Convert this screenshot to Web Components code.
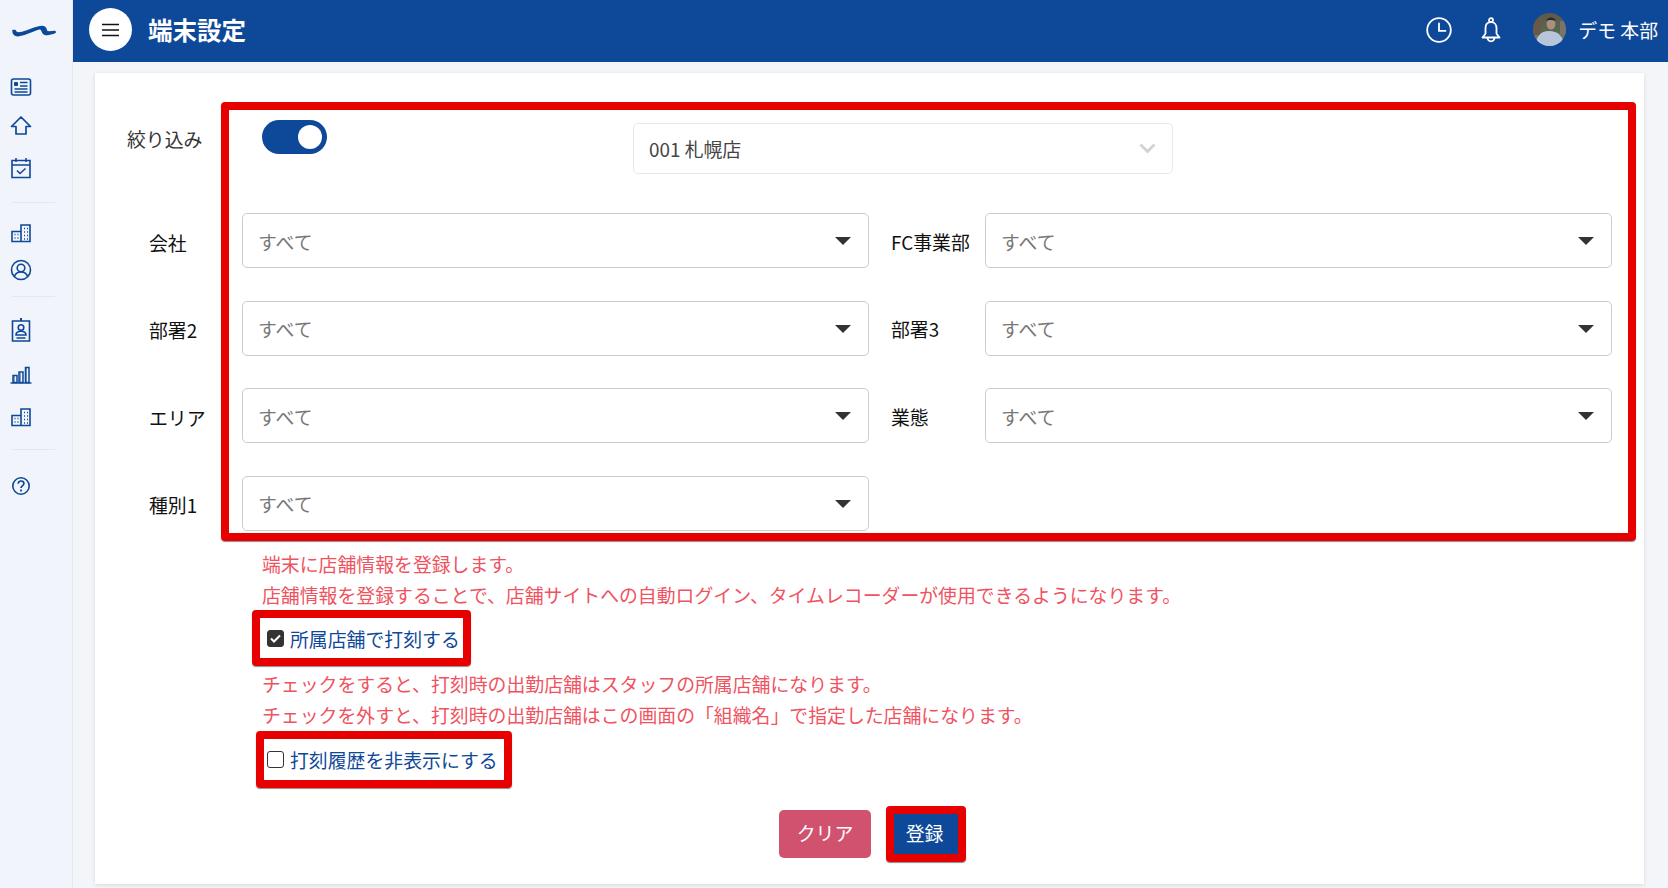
<!DOCTYPE html>
<html lang="ja">
<head>
<meta charset="utf-8">
<title>端末設定</title>
<style>
  html, body { margin: 0; height: 100%; overflow: hidden; }
  body { font-family: "Noto Sans CJK JP", "Noto Sans", sans-serif; font-size: 18.87px; background: #f3f5f8; }
</style>
</head>
<body>
<app-shell></app-shell>

<script>
const ink = '#0e4898';
const building = `<svg width="22" height="22" viewBox="0 0 22 22" fill="none" stroke="${ink}" stroke-width="1.6">
  <path d="M2 9.5h9v10H2zM11 19.5V3h9v16.500z"/>
  <path d="M4.500 12.500h1M7.500 12.500h1M4.500 16h1M7.500 16h1M14 6.500h1M17 6.500h1M14 10h1M17 10h1M14 13.500h1M17 13.500h1M14 17h1M17 17h1" stroke-width="1.500"/>
</svg>`;

class AppSidebar extends HTMLElement {
  constructor() {
    super();
    this.attachShadow({ mode: 'open' }).innerHTML = `
      <style>
        :host { display: flex; flex-direction: column; width: 72px; flex: none; height: 888px;
          background: #f1f5fb; border-right: 1px solid #e2e8f4; }
        .logo { height: 62px; display: flex; align-items: center; margin-left: 12px; }
        .item { height: 24px; display: flex; align-items: center; justify-content: center; width: 41px; }
        hr { border: 0; border-top: 1px solid #e4e8ee; width: 43px; margin: 0 0 0 12px; }
      </style>
      <div class="logo">
        <svg width="44" height="16" viewBox="0 0 44 16" fill="${ink}" stroke="${ink}" stroke-linecap="round" stroke-linejoin="round">
          <path d="M1 7.500C1 11.500 3 13 7 12.500S17 9.500 22 7.500 29 5 30 7.500 31 11.500 34 11.500 40 10.500 43 9.500L43 8.500C39 9 35 9.500 34.500 8S34 3.500 30 3.500 22 5.500 15 8 4 11 3 7.500z" stroke-width="1.600"/>
        </svg>
      </div>
      <div class="item" style="margin-top:13px">
        <svg width="22" height="20" viewBox="0 0 22 20" fill="none" stroke="${ink}" stroke-width="1.600">
          <rect x="1.500" y="2" width="19" height="16" rx="2"/>
          <path d="M4.500 5.500h3v3h-3z" fill="${ink}" stroke-width="1"/>
          <path d="M10 5.500h7.500M10 9h7.500M4.500 12h13M4.500 15h13"/>
        </svg>
      </div>
      <div class="item" style="margin-top:15px">
        <svg width="22" height="22" viewBox="0 0 22 22" fill="none" stroke="${ink}" stroke-width="1.700" stroke-linejoin="round">
          <path d="M11 2 1.500 11.500h4.500v7.500h10v-7.500h4.500z"/>
        </svg>
      </div>
      <div class="item" style="margin-top:18px">
        <svg width="22" height="22" viewBox="0 0 22 22" fill="none" stroke="${ink}" stroke-width="1.600">
          <path d="M2 3.500h18v17H2zM2 8h18"/>
          <path d="M6 1v4M16 1v4" stroke-width="1.500"/>
          <path d="M7 13.500l3 3 5.500-5"/>
        </svg>
      </div>
      <hr style="margin-top:22px">
      <div class="item" style="margin-top:18px">${building}</div>
      <div class="item" style="margin-top:13px">
        <svg width="22" height="22" viewBox="0 0 22 22" fill="none" stroke="${ink}" stroke-width="1.600">
          <circle cx="11" cy="11" r="9.500"/>
          <circle cx="11" cy="9" r="3.800"/>
          <path d="M4.500 17.500c1-3.500 3.500-4.500 6.500-4.500s5.500 1 6.500 4.500"/>
        </svg>
      </div>
      <hr style="margin-top:14px">
      <div class="item" style="margin-top:21px">
        <svg width="20" height="24" viewBox="0 0 20 24" fill="none" stroke="${ink}" stroke-width="1.600">
          <path d="M1.500 3h17v20h-17z"/>
          <path d="M10 0v3" stroke-width="2"/>
          <circle cx="10" cy="9.500" r="2.800"/>
          <path d="M5 17c0-3 2-3.800 5-3.800s5 .8 5 3.800zM5.500 20h9"/>
        </svg>
      </div>
      <div class="item" style="margin-top:21px">
        <svg width="22" height="18" viewBox="0 0 22 18" fill="none" stroke="${ink}" stroke-width="1.500">
          <path d="M3 9.500h4v7H3zM9 6h4v10.500H9zM15.500 1.500h3.500v15h-3.500z"/>
          <path d="M.5 17h21" stroke-width="1.400"/>
          <path d="M3.500 10h1v6h-1zM15.500 2h1v14h-1zM9.500 7h1v9h-1z" fill="${ink}" stroke="none"/>
        </svg>
      </div>
      <div class="item" style="margin-top:18px">${building}</div>
      <hr style="margin-top:20px">
      <div class="item" style="margin-top:24px">
        <svg width="20" height="20" viewBox="0 0 20 20" fill="none" stroke="${ink}" stroke-width="1.600">
          <circle cx="10" cy="10" r="8.200"/>
          <path d="M7.200 7.800C7.200 6 8.500 5 10 5s2.900 1 2.900 2.600c0 2.300-2.900 2.300-2.900 4.400" stroke-width="1.700"/>
          <path d="M10 13.600v1.800" stroke-width="1.800"/>
        </svg>
      </div>`;
  }
}

class AppTopbar extends HTMLElement {
  constructor() {
    super();
    this.attachShadow({ mode: 'open' }).innerHTML = `
      <style>
        :host { display: flex; align-items: center; height: 62px; background: ${ink}; color: #fff; flex: none; padding-left: 16px; }
        .menu { width: 43px; height: 43px; border-radius: 50%; background: #fff; display: flex; align-items: center; justify-content: center; margin-top: -3px; }
        h1 { margin: -1px 0 0 16px; font-size: 24.500px; font-weight: 700; line-height: 1; flex: 1; }
        .right { display: flex; align-items: center; margin-top: -3px; }
        .user { margin-left: 12px; margin-right: 10px; white-space: pre; }
        svg { display: block; }
      </style>
      <div class="menu">
        <svg width="17" height="14" viewBox="0 0 17 14" stroke="#111" stroke-width="1.700"><path d="M0 1.500h17M0 7h17M0 12.500h17"/></svg>
      </div>
      <h1><slot></slot></h1>
      <div class="right">
        <svg width="26" height="26" viewBox="0 0 26 26" fill="none" stroke="#fff" stroke-width="1.800" stroke-linecap="round">
          <circle cx="13" cy="13" r="11.800"/><path d="M13 6.500V13.800h6.500"/>
        </svg>
        <svg style="margin-left:29px" width="20" height="26" viewBox="0 0 20 26" fill="none" stroke="#fff" stroke-width="1.800" stroke-linejoin="round">
          <circle cx="10" cy="3.200" r="2"/>
          <path d="M10 5.200c-3.800 0-5.500 2.800-5.500 6v5.500L1.500 20.500h17l-3-3.800v-5.500c0-3.200-1.700-6-5.500-6z"/>
          <path d="M6.500 21c.3 2.400 1.700 3.300 3.500 3.300s3.200-.9 3.500-3.300"/>
        </svg>
        <svg style="margin-left:32px" width="33" height="33" viewBox="0 0 33 33">
          <defs>
            <clipPath id="av"><circle cx="16.500" cy="16.500" r="16.500"/></clipPath>
            <linearGradient id="bgav" x1="0" y1="0" x2="0" y2="1"><stop offset="0" stop-color="#5f584e"/><stop offset=".55" stop-color="#56684f"/><stop offset="1" stop-color="#8a9a92"/></linearGradient>
          </defs>
          <g clip-path="url(#av)">
            <rect width="33" height="33" fill="url(#bgav)"/>
            <path d="M0 6h8v16H0z" fill="#6a5748"/>
            <path d="M27 8h6v14h-6z" fill="#7b7468"/>
            <path d="M3 33c0-9 4-15 13-15s14 5 15 15z" fill="#b9c6da"/>
            <ellipse cx="18" cy="11" rx="4.500" ry="5.500" fill="#a9907e"/>
            <path d="M13 8c1-4 8-5 10 0-3-1-7-1.500-10 0z" fill="#2e2a26"/>
          </g>
        </svg>
        <span class="user">デモ 本部</span>
      </div>`;
  }
}

class AppShell extends HTMLElement {
  constructor() {
    super();
    this.attachShadow({ mode: 'open' }).innerHTML = `
      <style>
        :host { display: flex; width: 1668px; height: 888px; overflow: hidden; }
        main { flex: 1; display: flex; flex-direction: column; min-width: 0; }
        .content { padding: 11px 24px 0 22px; }
        .card { background: #fff; height: 811px; box-sizing: border-box; padding-top: 29px; box-shadow: 0 1px 4px rgba(0,0,0,.12); }
        .filter { display: flex; align-items: flex-start; }
        .names { width: 126px; flex: none; color: #111; }
        .names div { height: 55px; margin-bottom: 32.600px; display: flex; align-items: center; padding-left: 54px; box-sizing: border-box; white-space: nowrap; }
        .names div:last-child { margin-bottom: 0; }
        .names .head { color: #333; height: 30px; margin: 21px 0 61.500px; padding: 0 0 0 32px; }
        .top { display: flex; height: 103px; padding-left: 33px; box-sizing: border-box; }
        .grid { display: grid; grid-template-columns: 627px 116px 627px; row-gap: 32.600px; padding-left: 13px; grid-auto-rows: 55px; }
        .grid span { padding: 1px 0 0 22px; display: flex; align-items: center; color: #111; white-space: nowrap; }
        .note { color: #ef5361; line-height: 31px; padding-left: 167px; white-space: nowrap; }
        .n1 { margin-top: 7px; }
        .n2 { margin: 1.500px 0 1.500px; }
        .c1 { margin-left: 157px; }
        .c2 { margin-left: 161px; }
        .actions { display: flex; align-items: center; gap: 15px; padding-left: 684px; margin-top: 18px; }
      </style>
      <app-sidebar></app-sidebar>
      <main>
        <app-topbar>端末設定</app-topbar>
        <div class="content">
          <div class="card">
            <div class="filter">
              <div class="names">
                <div class="head">絞り込み</div>
                <div>会社</div>
                <div>部署2</div>
                <div>エリア</div>
                <div>種別1</div>
              </div>
              <red-mark>
                <div style="width:1399px;height:423px">
                  <div class="top">
                    <switch-toggle></switch-toggle>
                    <store-picker>001 札幌店</store-picker>
                  </div>
                  <div class="grid">
                    <select-box>すべて</select-box><span>FC事業部</span><select-box>すべて</select-box>
                    <select-box>すべて</select-box><span>部署3</span><select-box>すべて</select-box>
                    <select-box>すべて</select-box><span>業態</span><select-box>すべて</select-box>
                    <select-box>すべて</select-box>
                  </div>
                </div>
              </red-mark>
            </div>
            <div class="note n1">端末に店舗情報を登録します。<br>店舗情報を登録することで、店舗サイトへの自動ログイン、タイムレコーダーが使用できるようになります。</div>
            <red-mark class="c1"><check-line checked style="width:203px;height:40px;padding-left:7px">所属店舗で打刻する</check-line></red-mark>
            <div class="note n2">チェックをすると、打刻時の出勤店舗はスタッフの所属店舗になります。<br>チェックを外すと、打刻時の出勤店舗はこの画面の「組織名」で指定した店舗になります。</div>
            <red-mark class="c2"><check-line style="width:240px;height:41px;padding-left:3px">打刻履歴を非表示にする</check-line></red-mark>
            <div class="actions">
              <flat-button tone="clear">クリア</flat-button>
              <red-mark><flat-button tone="main">登録</flat-button></red-mark>
            </div>
          </div>
        </div>
      </main>`;
  }
}

// red annotation frame round whatever is slotted
class RedMark extends HTMLElement {
  constructor() {
    super();
    this.attachShadow({ mode: 'open' }).innerHTML = `
      <style>
        :host { display: block; width: fit-content; border: 8px solid #e60000; border-radius: 4px; box-shadow: 0 1px 1px rgba(0,0,0,.45); }
      </style>
      <slot></slot>`;
  }
}

class SwitchToggle extends HTMLElement {
  constructor() {
    super();
    this.attachShadow({ mode: 'open' }).innerHTML = `
      <style>
        :host { display: flex; align-items: center; justify-content: flex-end; box-sizing: border-box; width: 65px; height: 34px; margin-top: 10px;
          padding-right: 5px; border-radius: 17px; background: ${ink}; flex: none; }
        i { width: 24px; height: 24px; border-radius: 50%; background: #fff; }
      </style>
      <i></i>`;
  }
}

class StorePicker extends HTMLElement {
  constructor() {
    super();
    this.attachShadow({ mode: 'open' }).innerHTML = `
      <style>
        :host { display: flex; align-items: center; justify-content: space-between; box-sizing: border-box; width: 540px; height: 51px; margin: 13px 0 0 306px;
          padding: 0 16px 0 15px; border: 1px solid #e8e8e8; border-radius: 5px; color: #444; }
        svg { display: block; }
      </style>
      <slot></slot>
      <svg width="17" height="11" viewBox="0 0 17 11" fill="none" stroke="#d2d2d2" stroke-width="2.800"><path d="M1.500 1.500l7 7 7-7"/></svg>`;
  }
}

class SelectBox extends HTMLElement {
  constructor() {
    super();
    this.attachShadow({ mode: 'open' }).innerHTML = `
      <style>
        :host { display: flex; align-items: center; justify-content: space-between; box-sizing: border-box; height: 55px;
          padding: 1px 17px 0 15px; border: 1px solid #ccc; border-radius: 5px; color: #777; background: #fff; }
        i { width: 0; height: 0; border: 8px solid transparent; border-top: 8px solid #333; border-bottom: 0; }
      </style>
      <slot></slot><i></i>`;
  }
}

class CheckLine extends HTMLElement {
  constructor() {
    super();
    const on = this.hasAttribute('checked');
    this.attachShadow({ mode: 'open' }).innerHTML = `
      <style>
        :host { display: flex; align-items: center; box-sizing: border-box; padding: 0 0 0 8px; gap: 6px; color: ${ink}; white-space: nowrap; background: #fff; }
        .box { box-sizing: border-box; width: 17px; height: 17px; border-radius: 3px; display: flex; align-items: center; justify-content: center;
          border: 1.500px solid #333; background: ${on ? '#333' : '#fff'}; flex: none; }
        svg { display: block; }
      </style>
      <span class="box">${on ? '<svg width="11" height="9" viewBox="0 0 11 9" fill="none" stroke="#fff" stroke-width="2"><path d="M1 4.500l3 3 6-6"/></svg>' : ''}</span>
      <slot></slot>`;
  }
}

class FlatButton extends HTMLElement {
  constructor() {
    super();
    const main = this.getAttribute('tone') === 'main';
    this.attachShadow({ mode: 'open' }).innerHTML = `
      <style>
        :host { display: flex; align-items: center; justify-content: center; color: #fff; flex: none; box-sizing: border-box; padding: 0 ${main ? 3 : 0}px 3px 0;
          width: ${main ? 64 : 92}px; height: ${main ? 40 : 48}px; background: ${main ? ink : '#d0526f'}; border-radius: ${main ? 0 : 5}px; }
      </style>
      <slot></slot>`;
  }
}

customElements.define('app-sidebar', AppSidebar);
customElements.define('app-topbar', AppTopbar);
customElements.define('red-mark', RedMark);
customElements.define('switch-toggle', SwitchToggle);
customElements.define('store-picker', StorePicker);
customElements.define('select-box', SelectBox);
customElements.define('check-line', CheckLine);
customElements.define('flat-button', FlatButton);
customElements.define('app-shell', AppShell);
</script>
</body>
</html>
